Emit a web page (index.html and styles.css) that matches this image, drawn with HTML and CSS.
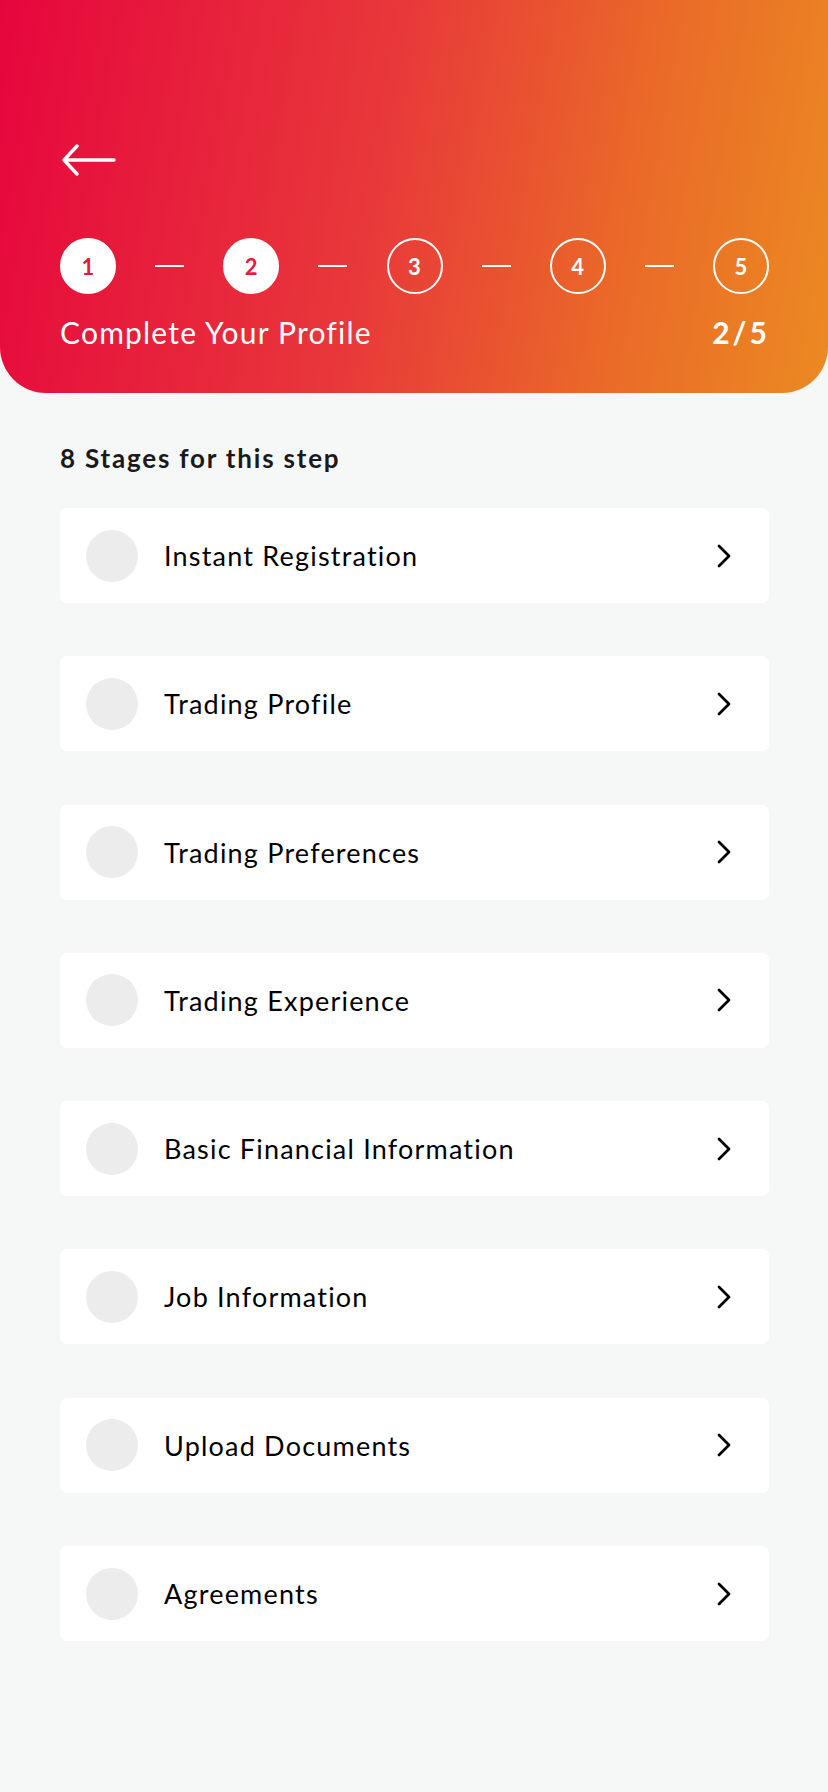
FILE: index.html
```html
<!DOCTYPE html>
<html>
<head>
<meta charset="utf-8">
<link rel="stylesheet" href="styles.css">
</head>
<body>
<header class="hero">
  <div class="back">
    <svg width="56" height="32" viewBox="0 0 56 32"><path d="M54 16H4M17 2L4 16L17 30" fill="none" stroke="#fff" stroke-width="3.4" stroke-linecap="round" stroke-linejoin="round"/></svg>
  </div>
  <div class="steps">
    <span class="step done">1</span><span class="dash"></span>
    <span class="step done">2</span><span class="dash"></span>
    <span class="step">3</span><span class="dash"></span>
    <span class="step">4</span><span class="dash"></span>
    <span class="step">5</span>
  </div>
  <div class="title-row">
    <span class="title">Complete Your Profile</span>
    <span class="count">2/5</span>
  </div>
</header>
<main class="content">
  <h2 class="heading">8 Stages for this step</h2>
  <ul class="list">
    <li class="card"><span class="dot"></span><span class="label">Instant Registration</span><svg class="chev" width="16" height="24" viewBox="0 0 16 24"><path d="M3 2L13 12L3 22" fill="none" stroke="#000" stroke-width="2.8" stroke-linecap="round" stroke-linejoin="round"/></svg></li>
    <li class="card"><span class="dot"></span><span class="label">Trading Profile</span><svg class="chev" width="16" height="24" viewBox="0 0 16 24"><path d="M3 2L13 12L3 22" fill="none" stroke="#000" stroke-width="2.8" stroke-linecap="round" stroke-linejoin="round"/></svg></li>
    <li class="card"><span class="dot"></span><span class="label">Trading Preferences</span><svg class="chev" width="16" height="24" viewBox="0 0 16 24"><path d="M3 2L13 12L3 22" fill="none" stroke="#000" stroke-width="2.8" stroke-linecap="round" stroke-linejoin="round"/></svg></li>
    <li class="card"><span class="dot"></span><span class="label">Trading Experience</span><svg class="chev" width="16" height="24" viewBox="0 0 16 24"><path d="M3 2L13 12L3 22" fill="none" stroke="#000" stroke-width="2.8" stroke-linecap="round" stroke-linejoin="round"/></svg></li>
    <li class="card"><span class="dot"></span><span class="label">Basic Financial Information</span><svg class="chev" width="16" height="24" viewBox="0 0 16 24"><path d="M3 2L13 12L3 22" fill="none" stroke="#000" stroke-width="2.8" stroke-linecap="round" stroke-linejoin="round"/></svg></li>
    <li class="card"><span class="dot"></span><span class="label">Job Information</span><svg class="chev" width="16" height="24" viewBox="0 0 16 24"><path d="M3 2L13 12L3 22" fill="none" stroke="#000" stroke-width="2.8" stroke-linecap="round" stroke-linejoin="round"/></svg></li>
    <li class="card"><span class="dot"></span><span class="label">Upload Documents</span><svg class="chev" width="16" height="24" viewBox="0 0 16 24"><path d="M3 2L13 12L3 22" fill="none" stroke="#000" stroke-width="2.8" stroke-linecap="round" stroke-linejoin="round"/></svg></li>
    <li class="card"><span class="dot"></span><span class="label">Agreements</span><svg class="chev" width="16" height="24" viewBox="0 0 16 24"><path d="M3 2L13 12L3 22" fill="none" stroke="#000" stroke-width="2.8" stroke-linecap="round" stroke-linejoin="round"/></svg></li>
  </ul>
</main>
</body>
</html>
```
FILE: styles.css
```css
* { box-sizing: border-box; }
html, body {
  margin: 0;
  padding: 0;
  background: #f6f8f7;
  font-family: Lato, "Open Sans", sans-serif;
  color: #111;
}
.hero {
  height: 393px;
  padding: 144px 59px 0 60px;
  background: linear-gradient(100deg, #e6063d 0%, #e8383a 45%, #ea6a28 75%, #eb8a22 100%);
  border-radius: 0 0 46px 46px;
  color: #fff;
}
.back {
  height: 32px;
  display: flex;
  align-items: center;
}
.back svg { display: block; }
.steps {
  margin-top: 62px;
  display: flex;
  align-items: center;
  justify-content: space-between;
}
.step {
  width: 56px;
  height: 56px;
  border-radius: 50%;
  border: 2px solid #fff;
  display: flex;
  align-items: center;
  justify-content: center;
  font-weight: 700;
  font-size: 22px;
  color: #fff;
}
.step.done {
  background: #fff;
  color: #e51a3d;
}
.dash {
  width: 29px;
  height: 2px;
  background: #fff;
}
.title-row {
  margin-top: 18px;
  display: flex;
  justify-content: space-between;
  align-items: center;
  line-height: 40px;
}
.title {
  font-size: 30px;
  font-weight: 400;
  letter-spacing: 1.2px;
}
.count {
  font-size: 30px;
  font-weight: 700;
  letter-spacing: 3px;
  margin-right: -1px;
}
.content {
  padding: 50px 59px 0 60px;
}
.heading {
  margin: 0;
  font-size: 26px;
  font-weight: 700;
  color: #1a1a1a;
  line-height: 30px;
  letter-spacing: 1.8px;
}
.list {
  list-style: none;
  margin: 35px 0 0;
  padding: 0;
  display: flex;
  flex-direction: column;
  gap: 53.3px;
}
.card {
  height: 95px;
  background: #fff;
  border-radius: 7px;
  display: flex;
  align-items: center;
  padding: 0 37px 0 26px;
}
.dot {
  width: 52px;
  height: 52px;
  border-radius: 50%;
  background: #ececec;
  flex: none;
}
.label {
  margin-left: 26px;
  font-size: 27px;
  color: #000;
  flex: 1;
  letter-spacing: 1.2px;
}
.chev { display: block; flex: none; }
```
